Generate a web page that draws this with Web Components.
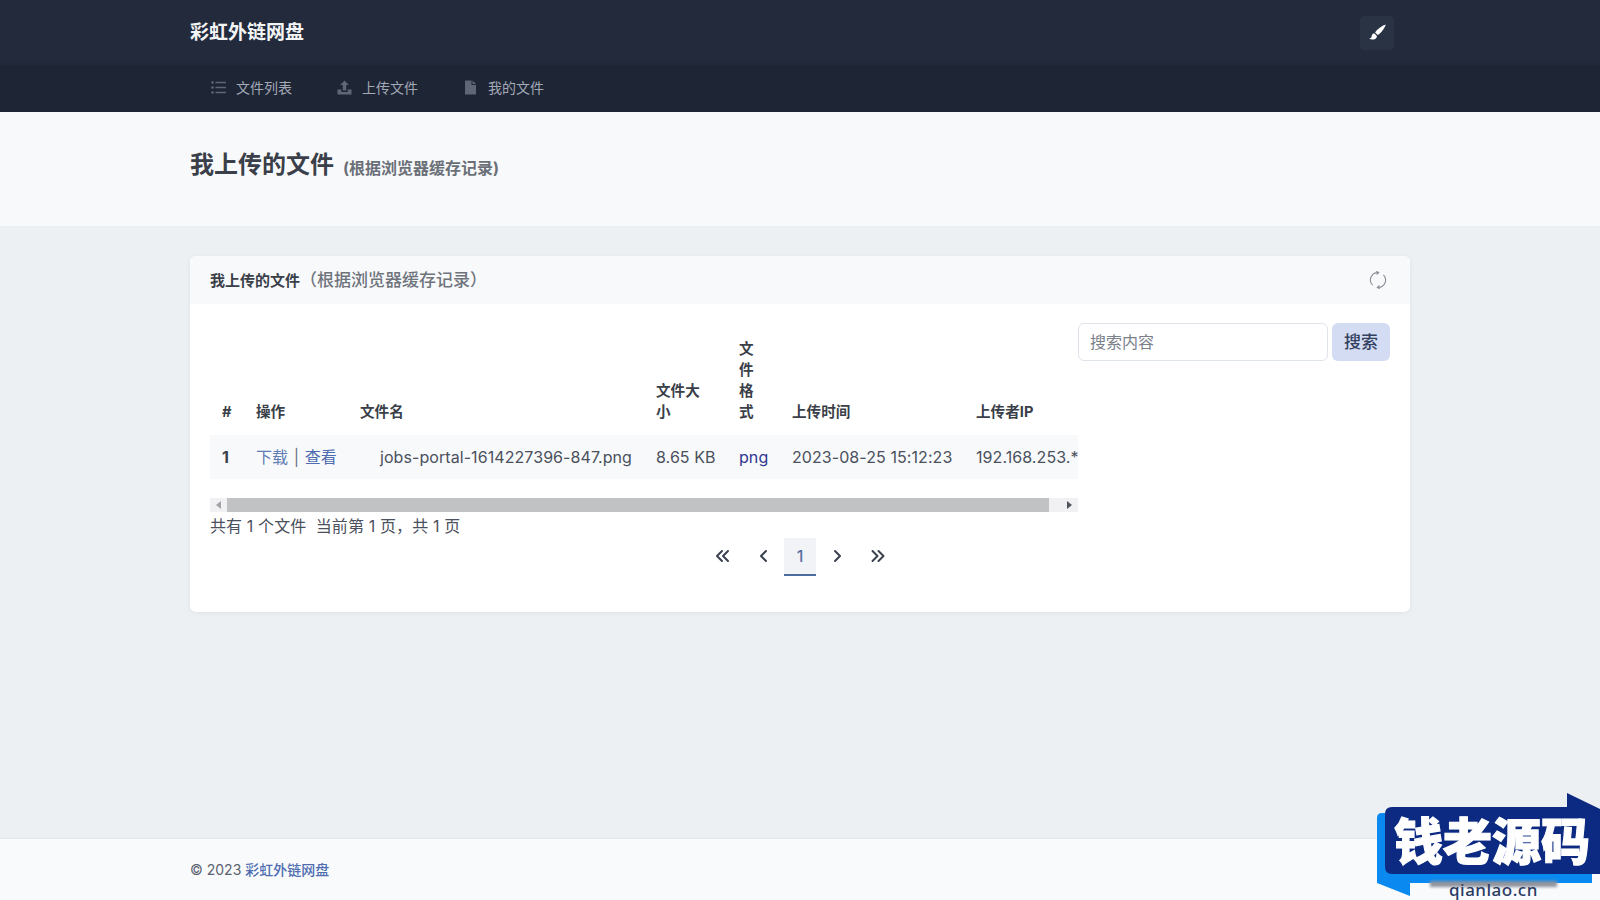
<!DOCTYPE html>
<html lang="zh-CN">
<head>
<meta charset="utf-8">
<title>彩虹外链网盘</title>
<style>
html,body{margin:0;padding:0;height:100%}
body{display:flex;flex-direction:column;min-height:100vh;overflow:hidden;background:#edf0f3;color:#3c4350;font:14px/1.5 Inter,"Noto Sans CJK SC",sans-serif}
main{flex:1;display:block}
</style>
</head>
<body>
<app-header brand="彩虹外链网盘"></app-header>
<page-title sub="(根据浏览器缓存记录)">我上传的文件</page-title>
<main><file-card></file-card></main>
<app-footer></app-footer>
<qianlao-badge></qianlao-badge>
<script>
const FONT='Inter,"Noto Sans CJK SC",sans-serif';
const WRAP='width:1220px;margin:0 auto';

class AppHeader extends HTMLElement{
  constructor(){
    super();
    const s=this.attachShadow({mode:'open'});
    s.innerHTML=`
      <style>
        :host{display:block;font-family:${FONT}}
        .top{height:65px;background:linear-gradient(#222a3c 92%,#202738)}
        .top .in{${WRAP};height:100%;display:flex;align-items:center;justify-content:space-between}
        .brand{font-size:19px;font-weight:700;color:#f3f4f6;padding-top:2px}
        .theme{width:34px;height:34px;margin-right:16px;border-radius:4px;background:#2a3344;display:flex;align-items:center;justify-content:center}
        nav{height:47px;background:#1e2535}
        nav .in{${WRAP};height:100%;display:flex;align-items:center;padding:0 0 2px 21px;box-sizing:border-box;gap:45px}
        .item{display:flex;align-items:center;gap:10px;font-size:14px;color:#a3a9b5}
        .item svg{width:15px;height:15px;fill:#5f6676;display:block}
      </style>
      <div class="top"><div class="in">
        <div class="brand">${this.getAttribute('brand')}</div>
        <div class="theme"><svg width="17" height="17" viewBox="0 0 16 16" fill="#fff"><path d="M15.800.4C13 1.200 7.700 4.600 5.700 7.900l2.600 2.500C11.400 8.600 15 3.300 15.800.4z"/><path d="M4.900 8.800C3 9.200 2.700 10.600 2.400 11.900 2.100 13 1.400 13.600 0 13.800c2.600 1.400 7.300 1.200 7.500-2.600z"/></svg></div>
      </div></div>
      <nav><div class="in">
        <div class="item"><svg viewBox="0 0 15 15"><circle cx="1.500" cy="2.500" r="1.300"/><circle cx="1.500" cy="7.500" r="1.300"/><circle cx="1.500" cy="12.500" r="1.300"/><path d="M4.500 1.700H15v1.500H4.500zM4.500 6.700H15v1.500H4.500zM4.500 11.700H15v1.500H4.500z"/></svg>文件列表</div>
        <div class="item"><svg viewBox="0 0 15 15"><path d="M7.500.5 11.800 5H9.200v5.500H5.800V5H3.200z"/><path d="M.5 9.500h3.800v2.500h6.400V9.500h3.800V14.500H.5z"/></svg>上传文件</div>
        <div class="item"><svg viewBox="0 0 15 15"><path d="M2 .5h6.500v4.500H13v9.500H2z"/><path d="M9.500.5 13 4H9.500z"/></svg>我的文件</div>
      </div></nav>`;
  }
}
customElements.define('app-header',AppHeader);

class PageTitle extends HTMLElement{
  constructor(){
    super();
    const s=this.attachShadow({mode:'open'});
    s.innerHTML=`
      <style>
        :host{display:block;height:114px;background:#f8f9fb;font-family:${FONT}}
        .in{${WRAP};height:100%;display:flex;align-items:center;gap:9px;padding-bottom:9px;box-sizing:border-box}
        h1{margin:0;font-size:24px;line-height:32px;font-weight:700;color:#3a3f49}
        small{font-size:16px;font-weight:700;color:#6b7078;padding-top:6px}
      </style>
      <div class="in"><h1><slot></slot></h1><small>${this.getAttribute('sub')}</small></div>`;
  }
}
customElements.define('page-title',PageTitle);

class FileTable extends HTMLElement{
  constructor(){
    super();
    const s=this.attachShadow({mode:'open'});
    s.innerHTML=`
      <style>
        :host{display:block;width:868px;font-family:${FONT}}
        .clip{overflow:hidden;padding-top:3.500px}
        table{border-collapse:collapse;table-layout:fixed;width:900px}
        th{font-size:14.600px;line-height:21px;font-weight:700;color:#3a3f49;text-align:left;vertical-align:bottom;padding:12px 12px 12.500px}
        td{font-size:16px;line-height:24px;letter-spacing:.07px;color:#4a505c;padding:10px 12px;white-space:nowrap;background:#f8f9fb}
        th span{display:block}
        .w1{width:45px}.w2{width:15px}
        td.idx{font-weight:700;color:#3a3f49}
        td.name{padding-left:32px}
        .dl{color:#5f7db4}.vw{color:#4f6bb0}.fmt{color:#2f3590}
        .sep{color:#6b7280;margin:0 1px}
        .bar{display:flex;height:14px;margin-top:18.500px;background:#f1f1f3}
        .btn{width:17px;display:flex;align-items:center;justify-content:center}
        .thumb{width:822px;background:#c1c2c4}
        .rest{flex:1;display:flex;justify-content:flex-end}
        i{display:block;width:0;height:0;border-style:solid;border-width:4px 0 4px 5px;border-color:transparent transparent transparent #50555c}
        i.l{border-width:4px 5px 4px 0;border-color:transparent #a0a3a8 transparent transparent}
      </style>
      <div class="clip"><table>
        <colgroup><col style="width:34px"><col style="width:104px"><col style="width:296px"><col style="width:83px"><col style="width:53px"><col style="width:184px"><col style="width:146px"></colgroup>
        <tr><th>#</th><th>操作</th><th>文件名</th><th><span class="w1">文件大小</span></th><th><span class="w2">文件格式</span></th><th>上传时间</th><th>上传者IP</th></tr>
        <tr><td class="idx">1</td><td><span class="dl">下载</span> <span class="sep">|</span> <span class="vw">查看</span></td><td class="name">jobs-portal-1614227396-847.png</td><td>8.65 KB</td><td class="fmt">png</td><td>2023-08-25 15:12:23</td><td>192.168.253.*</td></tr>
      </table></div>
      <div class="bar"><div class="btn"><i class="l"></i></div><div class="thumb"></div><div class="rest"><div class="btn"><i></i></div></div></div>`;
  }
}
customElements.define('file-table',FileTable);

class SearchBox extends HTMLElement{
  constructor(){
    super();
    const s=this.attachShadow({mode:'open'});
    s.innerHTML=`
      <style>
        :host{display:flex;gap:4px;font-family:${FONT}}
        .input{width:250px;height:38px;box-sizing:border-box;border:1px solid #dfe3ea;border-radius:6px;background:#fff;padding:0 11px;font-size:16px;line-height:36px;color:#7a808a}
        .go{width:58px;height:38px;border-radius:6px;background:#d3dcf3;color:#33415f;font-size:17px;font-weight:500;line-height:38px;text-align:center}
      </style>
      <div class="input">搜索内容</div><div class="go">搜索</div>`;
  }
}
customElements.define('search-box',SearchBox);

class PagerBar extends HTMLElement{
  constructor(){
    super();
    const s=this.attachShadow({mode:'open'});
    const chev=d=>`<svg width="16" height="16" viewBox="0 0 16 16" fill="none" stroke="#3a4250" stroke-width="2" stroke-linecap="round" stroke-linejoin="round"><path d="${d}"/></svg>`;
    s.innerHTML=`
      <style>
        :host{display:flex;justify-content:center;align-items:center;height:38px;font-family:${FONT}}
        .p{display:flex;align-items:center;justify-content:center;height:38px;width:41px}
        .p svg{margin-bottom:2px}
        .cur{width:32px;box-sizing:border-box;background:#f1f3f7;border-bottom:2px solid #4f6c9f;color:#5a6f9f;font-size:16px;font-weight:500}
      </style>
      <div class="p">${chev('M7 3 2 8l5 5M13 3l-5 5 5 5')}</div>
      <div class="p">${chev('M10 3 5 8l5 5')}</div>
      <div class="p cur">1</div>
      <div class="p">${chev('M6 3l5 5-5 5')}</div>
      <div class="p">${chev('M2.500 3l5 5-5 5M8.500 3l5 5-5 5')}</div>`;
  }
}
customElements.define('pager-bar',PagerBar);

class FileCard extends HTMLElement{
  constructor(){
    super();
    const s=this.attachShadow({mode:'open'});
    s.innerHTML=`
      <style>
        :host{display:block;${WRAP};margin-top:30px;background:#fff;border-radius:6px;box-shadow:0 1px 4px rgba(60,70,90,.08);font-family:${FONT}}
        .head{height:48px;background:#f8f9fb;border-radius:6px 6px 0 0;display:flex;align-items:center;justify-content:space-between;padding:0 23px 0 20px;box-sizing:border-box}
        .t{font-size:15px;font-weight:700;color:#3a3f49;padding-top:1px}
        .t b{font-size:17px;font-weight:500;color:#6f747c}
        .body{padding:19px 20px 36px}
        .row{display:flex;justify-content:space-between;align-items:flex-start}
        .count{font-size:16px;line-height:24px;letter-spacing:.12px;color:#4a505c;margin-top:2px}
      </style>
      <div class="head">
        <div class="t">我上传的文件<b>（根据浏览器缓存记录）</b></div>
        <svg width="18" height="18" viewBox="0 0 16 16" fill="none" stroke="#8a8f98" stroke-width="1"><path d="M3.200 12.600A6.500 6.500 0 0 1 8 1.500M12.800 3.400A6.500 6.500 0 0 1 8 14.500"/><path d="M6.600.2 8.600 1.500 6.800 3.100M9.400 15.800 7.400 14.500 9.200 12.900"/></svg>
      </div>
      <div class="body">
        <div class="row"><file-table></file-table><search-box></search-box></div>
        <div class="count">共有 1 个文件&nbsp; 当前第 1 页，共 1 页</div>
        <pager-bar></pager-bar>
      </div>`;
  }
}
customElements.define('file-card',FileCard);

class AppFooter extends HTMLElement{
  constructor(){
    super();
    const s=this.attachShadow({mode:'open'});
    s.innerHTML=`
      <style>
        :host{display:block;height:62px;background:#f8fafc;border-top:1px solid #e2e6ea;box-sizing:border-box;font-family:${FONT}}
        .in{${WRAP};height:100%;display:flex;align-items:center;font-size:14px;color:#5b6270}
        span{color:#4f6db0;font-weight:500;margin-left:4px}
      </style>
      <div class="in">© 2023 <span>彩虹外链网盘</span></div>`;
  }
}
customElements.define('app-footer',AppFooter);

class QianlaoBadge extends HTMLElement{
  constructor(){
    super();
    const s=this.attachShadow({mode:'open'});
    s.innerHTML=`
      <style>
        :host{position:absolute;left:1360px;top:780px;width:240px;height:120px;display:block}
        svg{display:block}
      </style>
      <svg width="240" height="120" viewBox="0 0 240 120">
        <path d="M22 33H232V103H50L50 116 17 103V38Q17 33 22 33Z" fill="#0a8af0"/>
        <rect x="70" y="101" width="127" height="6" fill="#8d929c" style="filter:blur(1.500px)"/>
        <path d="M32 27H207L207 13 240 29V94H32Q25 94 25 87V34Q25 27 32 27Z" fill="#0c2a82"/>
        <text x="34" y="80" font-family="'Noto Sans CJK SC',sans-serif" font-size="50" font-weight="900" fill="#fff" stroke="#fff" stroke-width="1.200" textLength="196" lengthAdjust="spacingAndGlyphs">钱老源码</text>
        <text x="89" y="116" font-family="'Noto Sans',sans-serif" font-size="17" font-weight="500" fill="#2b3a63" letter-spacing=".500">qianlao.cn</text>
      </svg>`;
  }
}
customElements.define('qianlao-badge',QianlaoBadge);
</script>
</body>
</html>
